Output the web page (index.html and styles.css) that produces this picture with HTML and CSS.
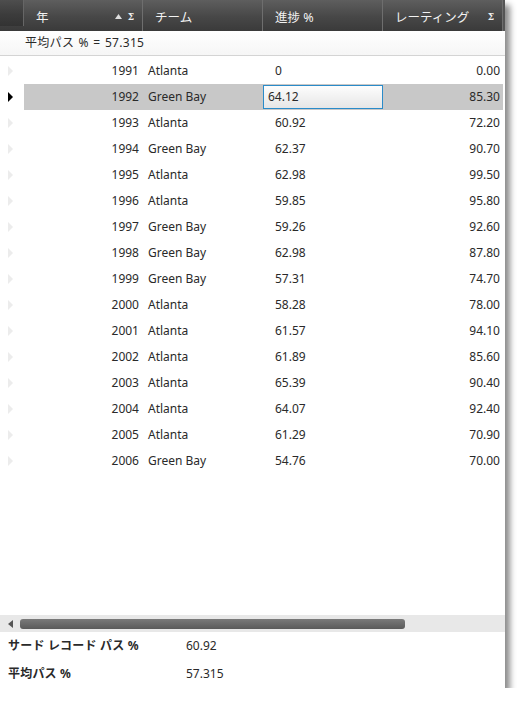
FILE: index.html
```
<!DOCTYPE html>
<html lang="ja">
<head>
<meta charset="utf-8">
<link rel="stylesheet" href="styles.css">
</head>
<body>
<div class="panel">
  <div class="header">
    <div class="hcell ind"></div>
    <div class="hcell"><span>年</span><span class="icons"><svg width="7" height="5" viewBox="0 0 7 5"><path d="M0 5 L3.5 0 L7 5 Z" fill="#ddd"/></svg><b class="sigma">Σ</b></span></div>
    <div class="hcell"><span>チーム</span></div>
    <div class="hcell"><span>進捗 %</span></div>
    <div class="hcell"><span>レーティング</span><span class="icons"><b class="sigma">Σ</b></span></div>
    <div class="hcell end"></div>
  </div>
  <div class="summary">平均パス % = 57.315</div>
  <div class="rows">
    <div class="row"><div class="ind"><i class="tri"></i></div><div class="c year">1991</div><div class="c team">Atlanta</div><div class="c prog">0</div><div class="c rate">0.00</div></div>
    <div class="row sel"><div class="ind"><i class="tri"></i></div><div class="c year">1992</div><div class="c team">Green Bay</div><div class="c prog"><div class="editor">64.12</div></div><div class="c rate">85.30</div></div>
    <div class="row"><div class="ind"><i class="tri"></i></div><div class="c year">1993</div><div class="c team">Atlanta</div><div class="c prog">60.92</div><div class="c rate">72.20</div></div>
    <div class="row"><div class="ind"><i class="tri"></i></div><div class="c year">1994</div><div class="c team">Green Bay</div><div class="c prog">62.37</div><div class="c rate">90.70</div></div>
    <div class="row"><div class="ind"><i class="tri"></i></div><div class="c year">1995</div><div class="c team">Atlanta</div><div class="c prog">62.98</div><div class="c rate">99.50</div></div>
    <div class="row"><div class="ind"><i class="tri"></i></div><div class="c year">1996</div><div class="c team">Atlanta</div><div class="c prog">59.85</div><div class="c rate">95.80</div></div>
    <div class="row"><div class="ind"><i class="tri"></i></div><div class="c year">1997</div><div class="c team">Green Bay</div><div class="c prog">59.26</div><div class="c rate">92.60</div></div>
    <div class="row"><div class="ind"><i class="tri"></i></div><div class="c year">1998</div><div class="c team">Green Bay</div><div class="c prog">62.98</div><div class="c rate">87.80</div></div>
    <div class="row"><div class="ind"><i class="tri"></i></div><div class="c year">1999</div><div class="c team">Green Bay</div><div class="c prog">57.31</div><div class="c rate">74.70</div></div>
    <div class="row"><div class="ind"><i class="tri"></i></div><div class="c year">2000</div><div class="c team">Atlanta</div><div class="c prog">58.28</div><div class="c rate">78.00</div></div>
    <div class="row"><div class="ind"><i class="tri"></i></div><div class="c year">2001</div><div class="c team">Atlanta</div><div class="c prog">61.57</div><div class="c rate">94.10</div></div>
    <div class="row"><div class="ind"><i class="tri"></i></div><div class="c year">2002</div><div class="c team">Atlanta</div><div class="c prog">61.89</div><div class="c rate">85.60</div></div>
    <div class="row"><div class="ind"><i class="tri"></i></div><div class="c year">2003</div><div class="c team">Atlanta</div><div class="c prog">65.39</div><div class="c rate">90.40</div></div>
    <div class="row"><div class="ind"><i class="tri"></i></div><div class="c year">2004</div><div class="c team">Atlanta</div><div class="c prog">64.07</div><div class="c rate">92.40</div></div>
    <div class="row"><div class="ind"><i class="tri"></i></div><div class="c year">2005</div><div class="c team">Atlanta</div><div class="c prog">61.29</div><div class="c rate">70.90</div></div>
    <div class="row"><div class="ind"><i class="tri"></i></div><div class="c year">2006</div><div class="c team">Green Bay</div><div class="c prog">54.76</div><div class="c rate">70.00</div></div>
  </div>
  <div class="hscroll">
    <svg class="arrow" width="5" height="8" viewBox="0 0 5 8"><path d="M5 0 L0 4 L5 8 Z" fill="#555"/></svg>
    <div class="thumb"></div>
  </div>
  <div class="footer">
    <div class="frow"><span class="flabel">サード レコード パス %</span><span class="fval">60.92</span></div>
    <div class="frow"><span class="flabel">平均パス %</span><span class="fval">57.315</span></div>
  </div>
</div>
</body>
</html>
```
FILE: styles.css
```
html, body {
  margin: 0;
  padding: 0;
  background: #fff;
}
body {
  font-family: "Noto Sans", "Noto Sans CJK JP", sans-serif;
  font-size: 12px;
  color: #2a2a2a;
}
.panel {
  width: 505px;
  height: 688px;
  background: #fff;
  box-shadow: 5px 5px 6px rgba(0,0,0,0.45);
  display: flex;
  flex-direction: column;
  overflow: hidden;
}
.header {
  height: 31px;
  display: grid;
  grid-template-columns: 24px 119px 120px 120px 120px 2px;
  background: linear-gradient(#5e5e5e, #474747 55%, #3a3a3a);
  color: #f2f2f2;
  flex: none;
}
.hcell {
  display: flex;
  align-items: center;
  justify-content: space-between;
  padding: 2px 8px 0 12px;
  border-right: 1px solid #6e6e6e;
  font-size: 12.5px;
}
.hcell.ind {
  background: linear-gradient(#4e4e4e, #3c3c3c 55%, #333);
  border-right: 1px solid #666;
  padding: 0;
}
.hcell.end { border: 0; padding: 0; background: #555; }
.icons {
  display: flex;
  align-items: center;
  gap: 6px;
}
.sigma {
  font-family: "DejaVu Serif", serif;
  font-size: 9px;
  font-weight: bold;
  color: #eee;
}
.summary {
  height: 25px;
  box-sizing: border-box;
  flex: none;
  display: flex;
  align-items: center;
  padding-left: 25px;
  padding-bottom: 2px;
  border-bottom: 1px solid #d4d4d4;
  background: linear-gradient(#fff, #f6f6f6);
  margin-bottom: 2px;
  letter-spacing: 0.3px;
  word-spacing: 1px;
}
.rows { flex: 1; }
.row {
  height: 26px;
  display: grid;
  grid-template-columns: 24px 119px 120px 120px 120px;
  align-items: center;
}
.row .c {
  height: 26px;
  box-sizing: border-box;
  padding-bottom: 1px;
  display: flex;
  align-items: center;
}
.row.sel .c { background: #c8c8c8; }
.row.sel .c.prog { padding-bottom: 0; }
.ind { display: flex; align-items: center; height: 26px; padding-left: 8px; }
.tri {
  width: 0; height: 0;
  border-top: 5px solid transparent;
  border-bottom: 5px solid transparent;
  border-left: 5px solid #ececec;
}
.row.sel .tri { border-left-color: #000; }
.year { justify-content: flex-end; padding-right: 4px; }
.team { padding-left: 5px; }
.prog { padding-left: 12px; }
.rate { justify-content: flex-end; padding-right: 3px; }
.row.sel .prog { padding-left: 0; }
.editor {
  box-sizing: border-box;
  width: 120px;
  height: 24px;
  border: 1px solid #2a8bc9;
  background: linear-gradient(#fdfdfd, #e6e6e6);
  display: flex;
  align-items: center;
  padding-left: 4px;
  padding-bottom: 1px;
}
.hscroll {
  height: 17px;
  flex: none;
  background: #e8e8e8;
  display: flex;
  align-items: center;
  padding-left: 8px;
  gap: 7px;
}
.thumb {
  width: 385px;
  height: 10px;
  border-radius: 3px;
  background: linear-gradient(#7a7a7a, #5a5a5a);
}
.footer {
  flex: none;
  height: 56px;
  display: flex;
  flex-direction: column;
}
.frow {
  height: 28px;
  box-sizing: border-box;
  padding-bottom: 2px;
  display: flex;
  align-items: center;
  padding-left: 8px;
}
.flabel { width: 178px; font-weight: bold; letter-spacing: 0.2px; }
```
